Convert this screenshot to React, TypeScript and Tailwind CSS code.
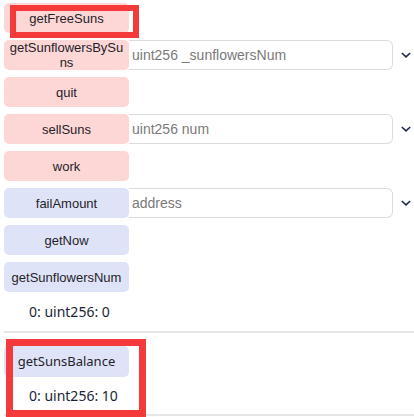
import React from "react";

type Row = { name: string; kind: "pink" | "blue"; input?: string };

const rows: Row[] = [
  { name: "getFreeSuns", kind: "pink" },
  { name: "getSunflowersBySuns", kind: "pink", input: "uint256 _sunflowersNum" },
  { name: "quit", kind: "pink" },
  { name: "sellSuns", kind: "pink", input: "uint256 num" },
  { name: "work", kind: "pink" },
  { name: "failAmount", kind: "blue", input: "address" },
  { name: "getNow", kind: "blue" },
  { name: "getSunflowersNum", kind: "blue" },
];

function Chevron() {
  return (
    <svg width="12" height="8" viewBox="0 0 12 8" className="ml-[7px]">
      <path d="M1.8 2 L6 5.8 L10.2 2" fill="none" stroke="#1e2a4a" strokeWidth="1.6" />
    </svg>
  );
}

function Btn({ name, kind }: { name: string; kind: "pink" | "blue" }) {
  return (
    <div
      className={
        "w-[125px] h-[30px] shrink-0 rounded-[5px] flex items-center justify-center px-[4px] text-center text-[13px] leading-[15px] text-[#1f2328] break-all " +
        (kind === "pink" ? "bg-[#fdd6d6]" : "bg-[#dfe3f8]")
      }
    >
      {name}
    </div>
  );
}

export default function App() {
  return (
    <div className="relative w-[414px] h-[417px] bg-white overflow-hidden font-['Liberation_Sans',Arial,sans-serif]">
      <div className="pl-[4px]">
        <div className="pt-[3px] flex flex-col gap-[7px]">
          {rows.map((r) => (
            <div key={r.name} className="flex items-center h-[30px]">
              <Btn name={r.name} kind={r.kind} />
              {r.input && (
                <>
                  <div className="w-[264px] h-[30px] border border-l-0 border-[#dcdcdc] rounded-r-[6px] flex items-center pl-[3px] text-[14px] text-[#7a7a7a]">
                    {r.input}
                  </div>
                  <Chevron />
                </>
              )}
            </div>
          ))}
        </div>
        <div className="h-[39px] flex items-center pl-[25px] font-['Noto_Sans',sans-serif] text-[14px] text-[#1a1f36]">
          0: uint256: 0
        </div>
        <div className="h-[2px] bg-[#e6e6e6]" />
        <div className="mt-[13px] w-[125px] h-[31px] rounded-[5px] bg-[#dfe3f8] flex items-center justify-center font-['Noto_Sans',sans-serif] text-[13px] text-[#1f2328]">
          getSunsBalance
        </div>
        <div className="h-[37px] flex items-center pl-[25px] font-['Noto_Sans',sans-serif] text-[14px] text-[#1a1f36]">
          0: uint256: 10
        </div>
        <div className="h-[2px] bg-[#e6e6e6]" />
      </div>

      <div className="absolute left-[10px] top-[5px] w-[129px] h-[33px] border-[6px] border-[#f43a3a]" />
      <div className="absolute left-[6px] top-[339px] w-[140px] h-[78px] border-[7px] border-[#f43a3a]" />
    </div>
  );
}
